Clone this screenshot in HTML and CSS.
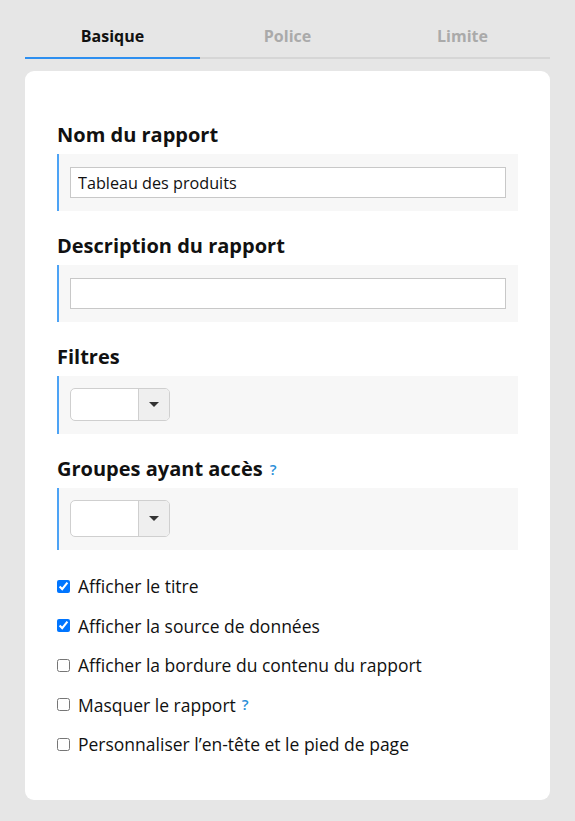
FILE: index.html
```html
<!DOCTYPE html>
<html lang="fr">
<head>
    <meta charset="UTF-8">
    <meta name="viewport" content="width=device-width, initial-scale=1.0">
    <title>Paramètres du rapport</title>
    <link rel="stylesheet" href="styles.css">
</head>
<body>
    <div class="page">
        <!-- onglets -->
        <div class="tabs">
            <div class="tab active">Basique</div>
            <div class="tab">Police</div>
            <div class="tab">Limite</div>
        </div>

        <div class="card">
            <div class="field">
                <h3 class="field_title">Nom du rapport</h3>
                <div class="field_box">
                    <input type="text" class="txt" value="Tableau des produits">
                </div>
            </div>

            <div class="field">
                <h3 class="field_title">Description du rapport</h3>
                <div class="field_box">
                    <input type="text" class="txt" value="">
                </div>
            </div>

            <div class="field">
                <h3 class="field_title">Filtres</h3>
                <div class="field_box box_sel">
                    <div class="sel">
                        <span class="sel_val"></span>
                        <span class="sel_btn"><i class="caret"></i></span>
                    </div>
                </div>
            </div>

            <div class="field">
                <h3 class="field_title">Groupes ayant accès <span class="help">?</span></h3>
                <div class="field_box box_sel">
                    <div class="sel sel_multi">
                        <span class="sel_val"></span>
                        <span class="sel_btn"><i class="caret"></i></span>
                    </div>
                </div>
            </div>

            <ul class="checks">
                <li><label><input type="checkbox" checked> Afficher le titre</label></li>
                <li><label><input type="checkbox" checked> Afficher la source de données</label></li>
                <li><label><input type="checkbox"> Afficher la bordure du contenu du rapport</label></li>
                <li><label><input type="checkbox"> Masquer le rapport <span class="help">?</span></label></li>
                <li><label><input type="checkbox"> Personnaliser l’en-tête et le pied de page</label></li>
            </ul>
        </div>
    </div>
</body>
</html>
```

FILE: styles.css
```css
* {margin: 0; padding: 0; box-sizing: border-box;}
body {background-color: #e6e6e6; font-family: "Open Sans", "Noto Sans", sans-serif; color: #111;}
.page {padding: 0 25px 21px;}

/* onglets */
.tabs {display: flex; border-bottom: 2px solid #d6d6d6;}
.tab {flex: 1; text-align: center; font-size: 16px; line-height: 22px; font-weight: 700; color: #aaa; padding: 25px 0 10px;}
.tab.active {color: #111; border-bottom: 2px solid #2d8ff0; margin-bottom: -2px;}

/* carte */
.card {background-color: #fff; border-radius: 9px; margin-top: 12px; padding: 29px 32px 44px 32px;}
.field {margin-top: 21px;}
.field_title {font-size: 20px; line-height: 27px; height: 27px; font-weight: 700; margin-bottom: 6px;}
.field_box {background-color: #f7f7f7; border-left: 2px solid #4da3f5; padding: 13px 12px 13px 11px;}
.box_sel {padding-top: 12px;}

.txt {display: block; width: 100%; height: 31px; border: 1px solid #c8c8c8; background-color: #fff; padding: 0 7px;
font-family: inherit; font-size: 16.2px; color: #111; outline: none;}

/* liste déroulante */
.sel {display: flex; width: 100px; height: 33px; border: 1px solid #cfcfcf; border-radius: 5px; background-color: #fff; overflow: hidden;}
.sel_multi {height: 37px;}
.sel_val {flex: 1;}
.sel_btn {width: 31px; border-left: 1px solid #cfcfcf; background-color: #efefef; display: flex; align-items: center; justify-content: center;}
.caret {width: 0; height: 0; border-left: 5px solid transparent; border-right: 5px solid transparent; border-top: 5px solid #333;}

.help {color: #2a8fd8; font-size: 15px; line-height: 1; font-weight: 600; margin-left: 2px; vertical-align: 1px;}

/* cases à cocher */
.checks {list-style: none; margin-top: 24px;}
.checks li {height: 24px; margin-bottom: 15.5px;}
.checks li:last-child {margin-bottom: 0;}
.checks label {display: flex; align-items: center; font-size: 17.5px; line-height: 24px;}
.checks input {width: 13px; height: 13px; margin: 0 8px 0 0;}
.checks .help {margin-left: 6px;}
```
